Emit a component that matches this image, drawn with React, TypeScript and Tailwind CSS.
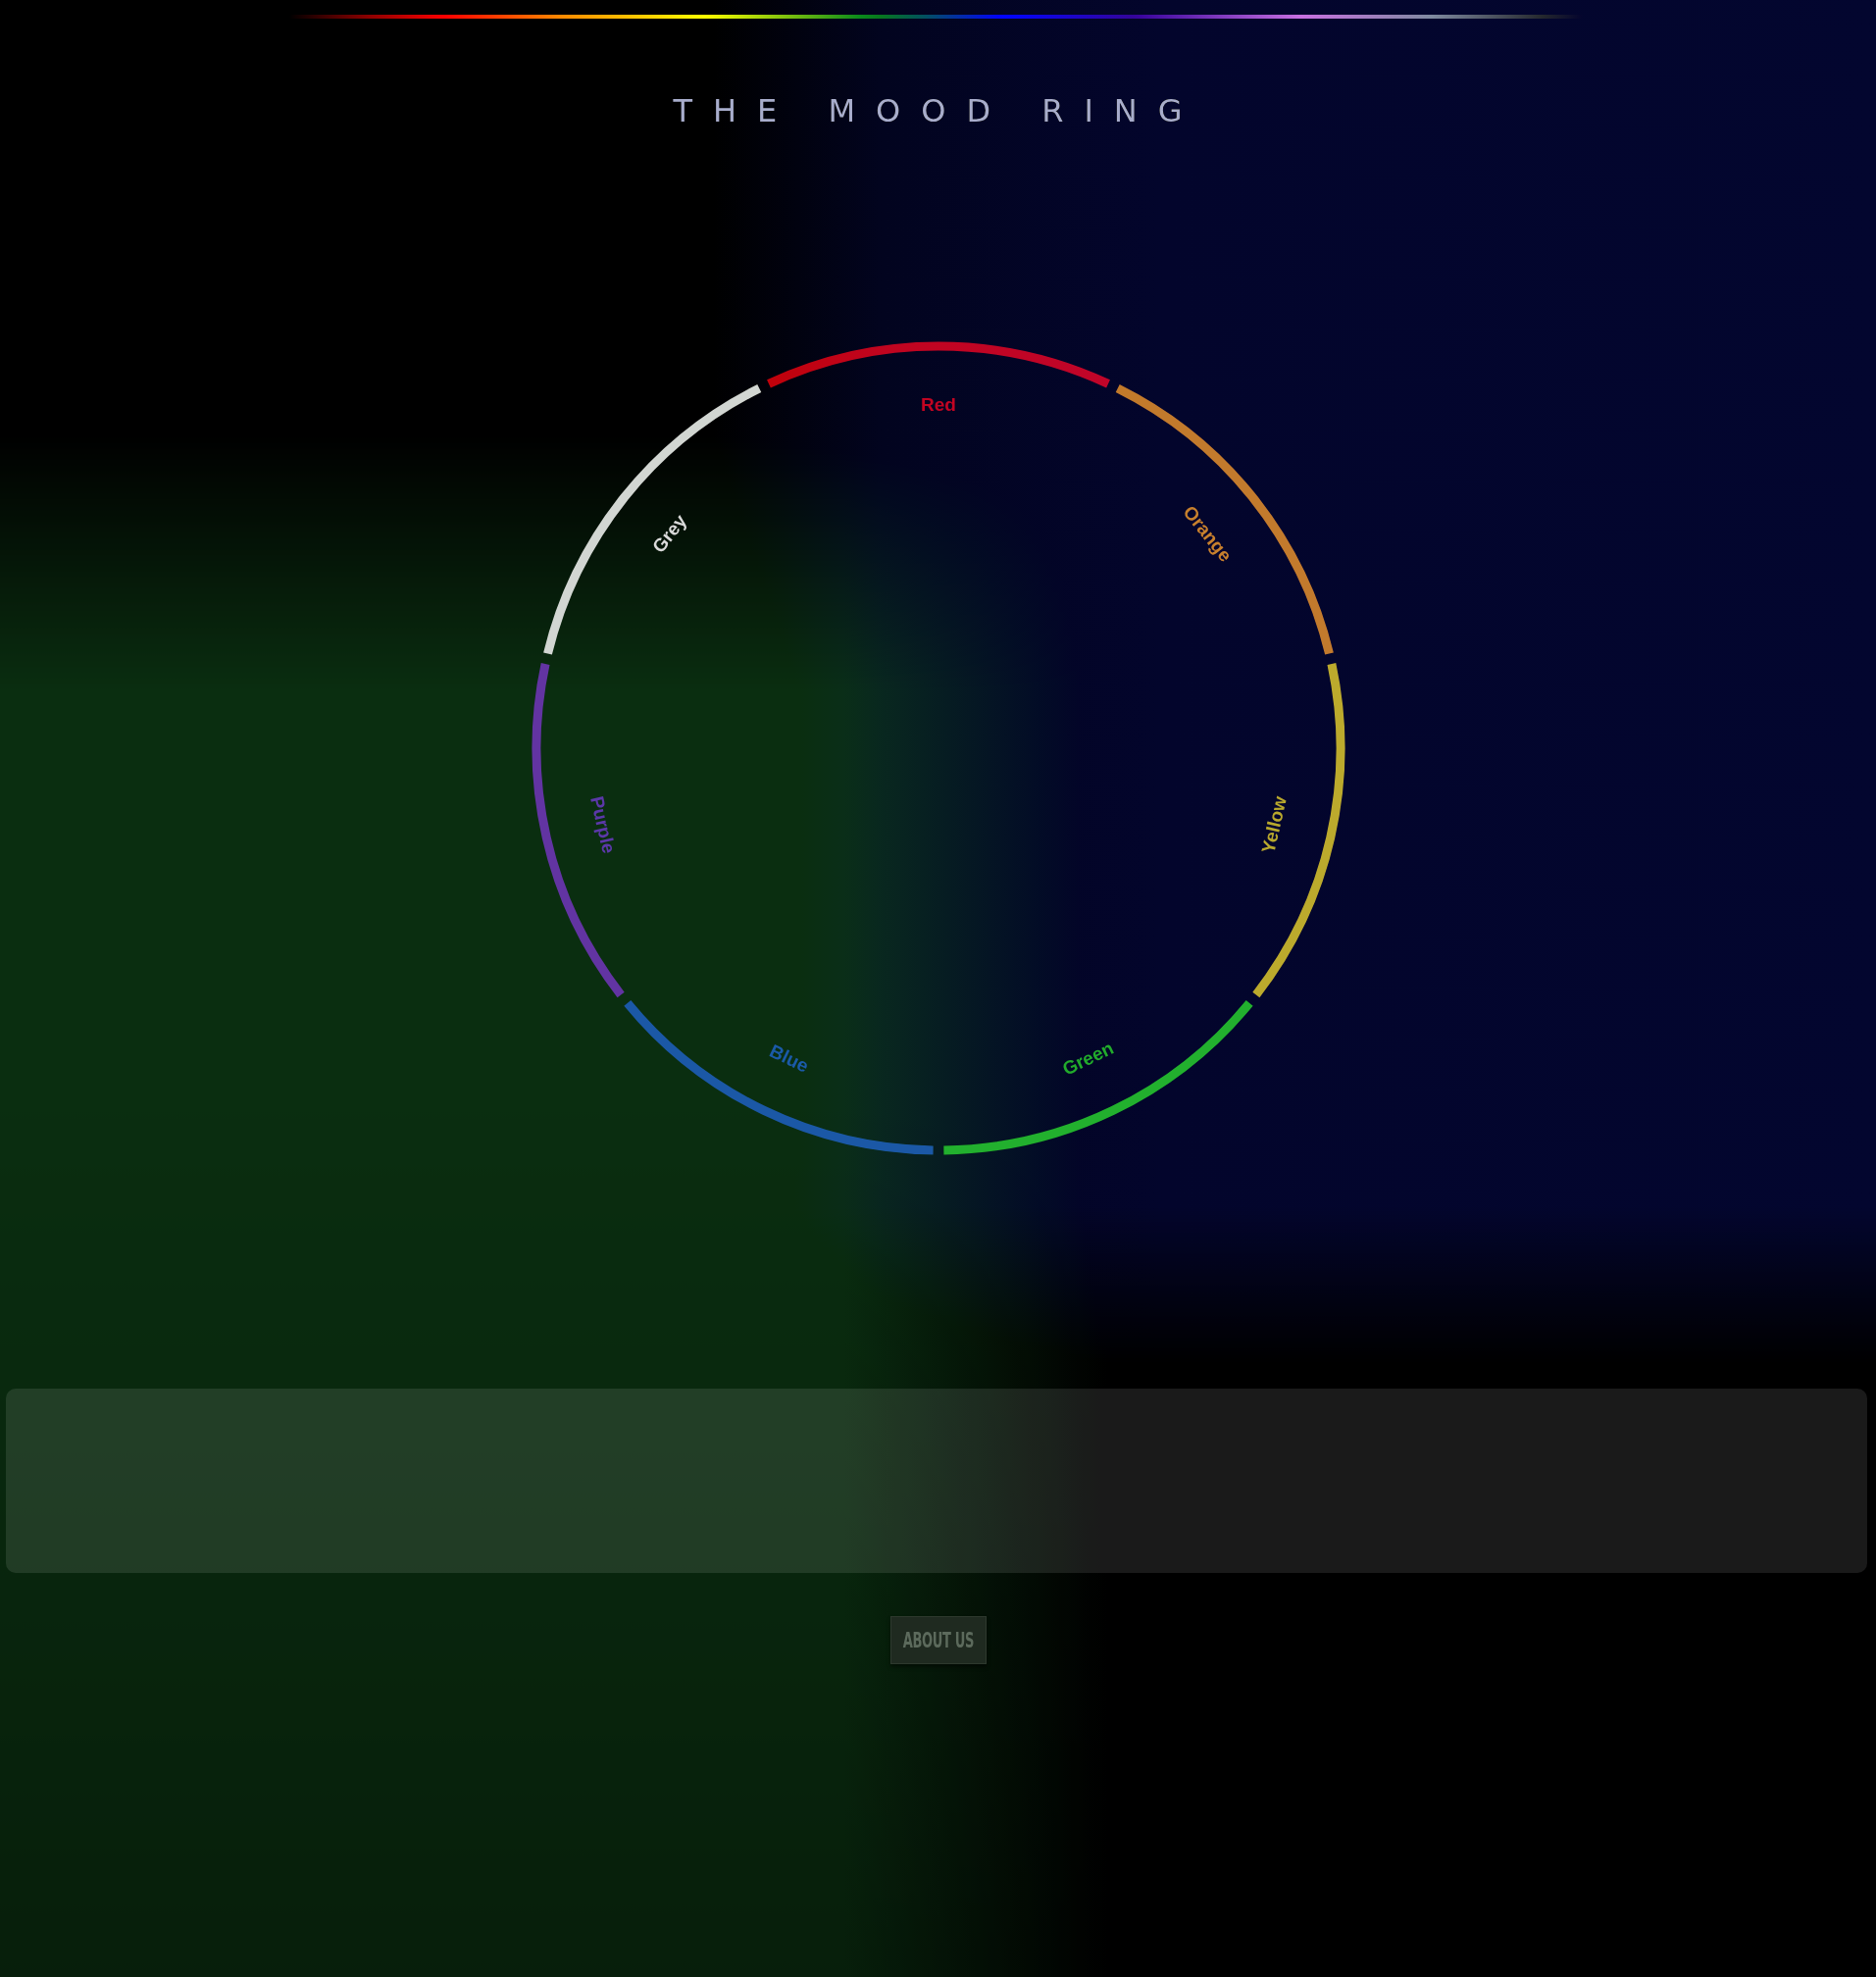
import React from 'react';

const SEGMENTS = [
  { name: 'Red', stroke: '#c00008', text: '#c2000a' },
  { name: 'Orange', stroke: '#c27a1e', text: '#c7801e' },
  { name: 'Yellow', stroke: '#bcaa2a', text: '#b8a82a' },
  { name: 'Green', stroke: '#22b02e', text: '#22ab2c' },
  { name: 'Blue', stroke: '#1b58a6', text: '#1b5aa8' },
  { name: 'Purple', stroke: '#6234a2', text: '#5b38a8' },
  { name: 'Grey', stroke: '#d2d6d2', text: '#dadada' },
];

const SIZE = 860;
const C = SIZE / 2;
const R = 410;
const LABEL_R = 351;
const STEP = 360 / 7;
const GAP = 0.75;

function point(deg: number, r: number) {
  const rad = (deg * Math.PI) / 180;
  return [C + r * Math.sin(rad), C - r * Math.cos(rad)];
}

function arc(a0: number, a1: number) {
  const [x0, y0] = point(a0, R);
  const [x1, y1] = point(a1, R);
  return `M ${x0} ${y0} A ${R} ${R} 0 0 1 ${x1} ${y1}`;
}

function MoodRing() {
  return (
    <svg width={SIZE} height={SIZE} viewBox={`0 0 ${SIZE} ${SIZE}`}>
      {SEGMENTS.map((s, i) => {
        const start = -STEP / 2 + i * STEP;
        const end = start + STEP;
        const mid = start + STEP / 2;
        const [lx, ly] = point(mid, LABEL_R);
        const norm = ((mid % 360) + 360) % 360;
        const rot = norm > 90 && norm < 270 ? norm - 180 : norm;
        return (
          <g key={s.name}>
            <path d={arc(start + GAP, end - GAP)} fill="none" stroke={s.stroke} strokeWidth={9} />
            <text
              x={0}
              y={0}
              transform={`translate(${lx} ${ly}) rotate(${rot})`}
              textAnchor="middle"
              dominantBaseline="central"
              fill={s.text}
              style={{ fontFamily: '"Liberation Sans", Arial, sans-serif', fontWeight: 700, fontSize: 19 }}
            >
              {s.name}
            </text>
          </g>
        );
      })}
    </svg>
  );
}

export default function App() {
  return (
    // navy glow, top right
    <div className="w-full min-h-screen bg-blend-multiply bg-[linear-gradient(to_bottom,#ffffff_61%,#000000_69%),linear-gradient(to_right,#000000_38%,#02041f_47%,#03052c_62%,#03062f_100%)]">
      {/* green glow, bottom left */}
      <div className="w-full min-h-screen flex flex-col items-center overflow-hidden mix-blend-lighten bg-blend-multiply bg-[linear-gradient(to_bottom,#000000_22%,#ffffff_35%,#ffffff_55%,#a8a8a8_100%),linear-gradient(to_right,#0a2e10_0%,#0a2e10_45%,#000000_59%)]">
        <div className="mt-[15px] h-[4px] w-[1323px] rounded-full bg-[linear-gradient(to_right,transparent,#8a0000_6%,#ff0000_12%,#ff8a00_21%,#ffff00_32%,#0a8a00_44%,#005060_49%,#0000ff_55%,#33009a_65%,#c870e0_78%,#7f8aa0_88%,transparent)]" />

        <h1 className="mt-[78px] text-[32px] leading-[32px] tracking-[21px] text-[#a8adcc] font-['DejaVu_Sans',sans-serif]">
          THE MOOD RING
        </h1>

        <div className="mt-[204px]">
          <MoodRing />
        </div>

        <div className="mt-[223px] self-stretch ml-[6px] mr-[9px] h-[188px] rounded-[10px] bg-white/10" />

        <button className="mt-[44px] w-[98px] h-[49px] flex items-center justify-center bg-[#1f2a20] border border-[#2e392e] shadow-[0_3px_4px_rgba(0,0,0,0.45)]">
          <span className="whitespace-nowrap text-[22px] leading-none font-bold text-[#5c6a5c] scale-x-[0.66] tracking-tight font-['Liberation_Sans_Narrow','DejaVu_Sans_Condensed',sans-serif]">
            ABOUT US
          </span>
        </button>
      </div>
    </div>
  );
}
